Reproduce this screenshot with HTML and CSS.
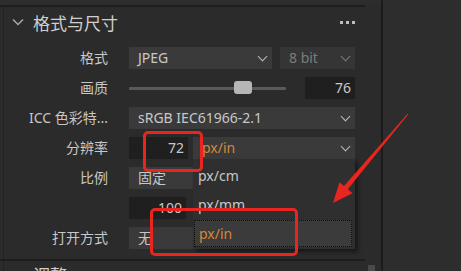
FILE: index.html
```html
<!DOCTYPE html>
<html lang="zh">
<head>
<meta charset="utf-8">
<link rel="stylesheet" href="styles.css">
</head>
<body>
<div class="app">
  <div class="panel">
    <div class="topstrip"></div>
    <div class="section">
      <div class="head">
        <svg class="caret" width="12" height="8" viewBox="0 0 12 8"><polyline points="1,1.5 6,6.5 11,1.5" fill="none" stroke="#a8a8a8" stroke-width="1.5"/></svg>
        <span class="title">格式与尺寸</span>
        <span class="more"><i></i><i></i><i></i></span>
      </div>
      <div class="rows">
        <div class="label">格式</div>
        <div class="ctrl">
          <div class="select w143">JPEG<span class="chev"></span></div>
          <div class="select dis grow">8 bit<span class="chev"></span></div>
        </div>

        <div class="label">画质</div>
        <div class="ctrl">
          <div class="slider"><div class="track"><div class="thumb"></div></div></div>
          <div class="num w50">76</div>
        </div>

        <div class="label">ICC 色彩特...</div>
        <div class="ctrl">
          <div class="select grow">sRGB IEC61966-2.1<span class="chev"></span></div>
        </div>

        <div class="label">分辨率</div>
        <div class="ctrl">
          <div class="num w59">72</div>
          <div class="select grow orange anchor">px/in<span class="chev"></span>
            <div class="menu">
              <div class="item">px/cm</div>
              <div class="item">px/mm</div>
              <div class="item sel">px/in</div>
            </div>
          </div>
        </div>

        <div class="label">比例</div>
        <div class="ctrl">
          <div class="select grow">固定<span class="chev"></span></div>
        </div>

        <div class="label"></div>
        <div class="ctrl">
          <div class="num w57">100</div>
        </div>

        <div class="label">打开方式</div>
        <div class="ctrl">
          <div class="select grow">无<span class="chev"></span></div>
        </div>
      </div>
    </div>
    <div class="bottomrow">
      <div class="section next">
        <div class="head short"><span class="title">调整</span></div>
      </div>
      <div class="sbar"></div>
    </div>
  </div>
  <div class="divider"></div>
  <div class="side"></div>

  <div class="mark m1"></div>
  <div class="mark m2"></div>
  <svg class="arrow" width="461" height="271" viewBox="0 0 461 271">
    <polygon points="408.4,114.3 347.8,189.3 352.5,193.3 333,203 339.5,182.3 344,186.1 407.6,113.7" fill="#e8261f"/>
  </svg>
</div>
</body>
</html>
```

FILE: styles.css
```css
* { box-sizing: border-box; }
html, body { margin: 0; padding: 0; }
body {
  width: 461px;
  height: 271px;
  overflow: hidden;
  background: #2b2b2b;
  font-family: "Noto Sans", "Noto Sans CJK SC", sans-serif;
  color: #c9c9c9;
}
.app {
  position: relative;
  display: flex;
  width: 461px;
  height: 271px;
  overflow: hidden;
}
.panel {
  width: 381px;
  flex: none;
  display: flex;
  flex-direction: column;
  overflow: hidden;
  background: linear-gradient(to right, #2b2b2b 3px, #222 3px, #222 4px, #2b2b2b 4px);
}
.panel > * { flex: none; }
.topstrip {
  height: 5px;
  background: #2d2d2d;
}
.section {
  width: 365px;
  border-top: 2px solid #1d1d1d;
  padding-bottom: 10px;
}
.bottomrow {
  display: flex;
}
.section.next { padding-bottom: 0; flex: none; }
.sbar {
  width: 7px;
  height: 8px;
  margin-left: 3px;
  margin-top: 6px;
  background: #4a4a4a;
}
.head {
  height: 30px;
  display: flex;
  align-items: center;
  padding-left: 12px;
}
.head.short { height: 26px; padding-left: 33px; }
.caret { flex: none; margin-right: 9px; }
.title {
  font-family: "Noto Sans CJK SC", sans-serif;
  font-size: 17px;
  color: #cfcfcf;
}
.more {
  margin-left: auto;
  margin-right: 10px;
  display: flex;
  gap: 3px;
}
.more i {
  display: block;
  width: 3px;
  height: 3px;
  background: #bdbdbd;
}
.rows {
  margin-top: 10px;
  display: grid;
  grid-template-columns: 108px 226px;
  column-gap: 21px;
  row-gap: 8px;
  grid-auto-rows: 22px;
}
.label {
  text-align: right;
  font-size: 14px;
  line-height: 22px;
  white-space: nowrap;
  color: #c8c8c8;
}
.ctrl {
  display: flex;
  align-items: center;
  gap: 8px;
  height: 22px;
}
.select {
  position: relative;
  height: 22px;
  background: #3a3a3a;
  font-size: 14px;
  line-height: 22px;
  padding-left: 9px;
  color: #c8c8c8;
  white-space: nowrap;
}
.select.dis { background: #353535; color: #7c7c7c; }
.select.orange { color: #d4883a; }
.w143 { width: 143px; flex: none; }
.grow { flex: 1; }
.chev {
  position: absolute;
  right: 6px;
  top: 6px;
  width: 7px;
  height: 7px;
  border-right: 1.5px solid #bcbcbc;
  border-bottom: 1.5px solid #bcbcbc;
  transform: rotate(45deg);
}
.select.dis .chev { border-color: #7a7a7a; }
.num {
  height: 22px;
  background: #1f1f1f;
  font-size: 14px;
  line-height: 22px;
  text-align: right;
  padding-right: 4px;
  color: #c8c8c8;
  flex: none;
}
.w50 { width: 50px; }
.w59 { width: 59px; margin-right: -3px; }
.w57 { width: 57px; }
.slider {
  flex: 1;
  padding-right: 11px;
}
.track {
  position: relative;
  height: 3px;
  background: #5a5a5a;
  border-radius: 1px;
}
.thumb {
  position: absolute;
  left: 105px;
  top: -6px;
  width: 18px;
  height: 13px;
  border-radius: 3px;
  background: #b6b6b6;
}
.menu {
  position: absolute;
  left: 0;
  top: 22px;
  width: 162px;
  height: 90px;
  padding-top: 2px;
  background: #2f2f2f;
  box-shadow: 3px 3px 4px rgba(0,0,0,0.45);
  z-index: 2;
}
.item {
  height: 29px;
  line-height: 29px;
  padding-left: 5px;
  margin-right: 3px;
  font-size: 14px;
  color: #c8c8c8;
}
.item.sel {
  height: 27px;
  line-height: 25px;
  margin-top: 1px;
  margin-left: 1px;
  padding-left: 4px;
  background: #3b3b3b;
  border: 1px dotted #0e0e0e;
  color: #d4883a;
}
.divider {
  width: 2px;
  flex: none;
  background: #1b1b1b;
}
.side {
  flex: 1;
  background: #2d2d2d;
}
.mark {
  position: absolute;
  border: 3px solid #e8261f;
  border-radius: 5px;
  z-index: 3;
}
.m1 { left: 143px; top: 131px; width: 60px; height: 41px; }
.m2 { left: 150px; top: 208px; width: 148px; height: 48px; border-width: 3.5px; }
.arrow {
  position: absolute;
  left: 0;
  top: 0;
  z-index: 4;
  pointer-events: none;
}
```
